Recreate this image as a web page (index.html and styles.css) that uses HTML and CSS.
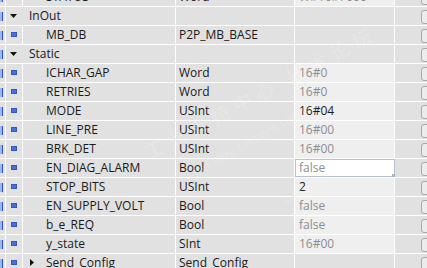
FILE: index.html
```html
<!DOCTYPE html>
<html lang="en">
	<head>
		<meta charset="UTF-8" />
		<title>Static interface</title>
		<link rel="stylesheet" href="styles.css">
	</head>
	<body>
		<div class="table">
			<div class="row">
				<div class="c edge"><span class="mark"></span></div>
				<div class="c icon"><span class="leaf"></span></div>
				<div class="c name">STATUS</div>
				<div class="c type">Word</div>
				<div class="c val light dim">W#16#7000</div>
				<div class="c check"><span class="box"></span></div>
			</div>
			<div class="row">
				<div class="c edge"><span class="mark"></span></div>
				<div class="c section"><svg class="tri" width="7" height="4" viewBox="0 0 7 4"><polygon points="0,0 7,0 3.5,4" fill="#111"/></svg>InOut</div>
				<div class="c type"></div>
				<div class="c val"></div>
				<div class="c check"><span class="box"></span></div>
			</div>
			<div class="row">
				<div class="c edge"><span class="mark"></span></div>
				<div class="c icon"><span class="leaf"></span></div>
				<div class="c name">MB_DB</div>
				<div class="c type">P2P_MB_BASE</div>
				<div class="c val"></div>
				<div class="c check"><span class="box"></span></div>
			</div>
			<div class="row">
				<div class="c edge"><span class="mark"></span></div>
				<div class="c section"><svg class="tri" width="7" height="4" viewBox="0 0 7 4"><polygon points="0,0 7,0 3.5,4" fill="#111"/></svg>Static</div>
				<div class="c type"></div>
				<div class="c val"></div>
				<div class="c check"><span class="box"></span></div>
			</div>
			<div class="row">
				<div class="c edge"><span class="mark"></span></div>
				<div class="c icon"><span class="leaf"></span></div>
				<div class="c name">ICHAR_GAP</div>
				<div class="c type">Word</div>
				<div class="c val light dim">16#0</div>
				<div class="c check"><span class="box"></span></div>
			</div>
			<div class="row">
				<div class="c edge"><span class="mark"></span></div>
				<div class="c icon"><span class="leaf"></span></div>
				<div class="c name">RETRIES</div>
				<div class="c type">Word</div>
				<div class="c val light dim">16#0</div>
				<div class="c check"><span class="box"></span></div>
			</div>
			<div class="row">
				<div class="c edge"><span class="mark"></span></div>
				<div class="c icon"><span class="leaf"></span></div>
				<div class="c name">MODE</div>
				<div class="c type">USInt</div>
				<div class="c val light">16#04</div>
				<div class="c check"><span class="box"></span></div>
			</div>
			<div class="row">
				<div class="c edge"><span class="mark"></span></div>
				<div class="c icon"><span class="leaf"></span></div>
				<div class="c name">LINE_PRE</div>
				<div class="c type">USInt</div>
				<div class="c val light dim">16#00</div>
				<div class="c check"><span class="box"></span></div>
			</div>
			<div class="row">
				<div class="c edge"><span class="mark"></span></div>
				<div class="c icon"><span class="leaf"></span></div>
				<div class="c name">BRK_DET</div>
				<div class="c type">USInt</div>
				<div class="c val light dim">16#00</div>
				<div class="c check"><span class="box"></span></div>
			</div>
			<div class="row">
				<div class="c edge"><span class="mark"></span></div>
				<div class="c icon"><span class="leaf"></span></div>
				<div class="c name">EN_DIAG_ALARM</div>
				<div class="c type">Bool</div>
				<div class="c val edit dim">false<span class="grip"></span></div>
				<div class="c check"><span class="box"></span></div>
			</div>
			<div class="row">
				<div class="c edge"><span class="mark"></span></div>
				<div class="c icon"><span class="leaf"></span></div>
				<div class="c name">STOP_BITS</div>
				<div class="c type">USInt</div>
				<div class="c val light">2</div>
				<div class="c check"><span class="box"></span></div>
			</div>
			<div class="row">
				<div class="c edge"><span class="mark"></span></div>
				<div class="c icon"><span class="leaf"></span></div>
				<div class="c name">EN_SUPPLY_VOLT</div>
				<div class="c type">Bool</div>
				<div class="c val light dim">false</div>
				<div class="c check"><span class="box"></span></div>
			</div>
			<div class="row">
				<div class="c edge"><span class="mark"></span></div>
				<div class="c icon"><span class="leaf"></span></div>
				<div class="c name">b_e_REQ</div>
				<div class="c type">Bool</div>
				<div class="c val light dim">false</div>
				<div class="c check"><span class="box"></span></div>
			</div>
			<div class="row">
				<div class="c edge"><span class="mark"></span></div>
				<div class="c icon"><span class="leaf"></span></div>
				<div class="c name">y_state</div>
				<div class="c type">SInt</div>
				<div class="c val light dim">16#00</div>
				<div class="c check"><span class="box"></span></div>
			</div>
			<div class="row">
				<div class="c edge"><span class="mark"></span></div>
				<div class="c icon"><span class="leaf"></span></div>
				<div class="c name sub"><svg class="tri" width="4" height="7" viewBox="0 0 4 7"><polygon points="0,0 4,3.5 0,7" fill="#111"/></svg>Send_Config</div>
				<div class="c type">Send_Config</div>
				<div class="c val"></div>
				<div class="c check"><span class="box"></span></div>
			</div>
		</div>
		<div class="watermark">
			<span class="wm-cn">工业支持中心 技术论坛</span>
			<span class="wm-en">industry.siemens.com/cs</span>
			<span class="wm-sp">support</span>
		</div>
	</body>
</html>
```
FILE: styles.css
```css
/* base */
body {
	margin: 0;
	background: #ffffff;
	font-family: 'Open Sans', 'Noto Sans', sans-serif;
	font-size: 12px;
	color: #1a1a1a;
	overflow: hidden;
	width: 427px;
	height: 268px;
	position: relative;
}

.table {
	display: flex;
	flex-direction: column;
	gap: 1px;
	margin-top: -12px;
	background: #ffffff;
}

.row {
	display: grid;
	grid-template-columns: 5px 16px 152px 118px 99px 40px;
	grid-auto-rows: 18px;
	gap: 1px;
}

.c {
	background: #e1e1e1;
	display: flex;
	align-items: center;
	line-height: 18px;
	white-space: nowrap;
	overflow: hidden;
	position: relative;
}

.light {
	background: #efefef;
}

.dim {
	color: #8e8e8e;
}

.edge .mark {
	width: 2px;
	height: 9px;
	background: #9db6ee;
	border-right: 1px solid #2c55c4;
}

.icon {
	justify-content: center;
}

.leaf {
	width: 6px;
	height: 5px;
	margin-left: -1px;
	margin-top: -1px;
	background: #4a6fd6;
	box-shadow: inset 0 0 0 1px #3256c2;
}

.name {
	padding-left: 23px;
}

.name.sub {
	padding-left: 7px;
}

.section {
	grid-column: span 2;
	padding-left: 4px;
}

.tri {
	flex: none;
	margin-right: 12px;
	margin-top: -1px;
}

.type {
	padding-left: 3px;
}

.val {
	padding-left: 4px;
}

.edit {
	background: #ffffff;
	box-shadow: inset 0 0 0 1px #b9c1cf;
	margin-right: -1px;
	z-index: 1;
}

.grip {
	position: absolute;
	right: 0;
	bottom: 0;
	width: 3px;
	height: 3px;
	background: #a9b6ca;
}

.check {
	justify-content: flex-start;
}

.box {
	margin-left: 26px;
	width: 14px;
	height: 12px;
	border: 1px solid #a8a8a8;
	border-radius: 3px;
	background: #ececec;
	margin-top: 1px;
}

.watermark {
	position: absolute;
	left: 0;
	top: 0;
	width: 427px;
	height: 268px;
	pointer-events: none;
	color: rgba(255, 255, 255, 0.22);
}

.wm-cn {
	position: absolute;
	left: 130px;
	top: 78px;
	font-size: 19px;
	font-family: 'Noto Sans CJK SC', sans-serif;
	transform: rotate(-28deg);
	letter-spacing: 6px;
}

.wm-en {
	position: absolute;
	left: 185px;
	top: 130px;
	font-size: 12px;
	transform: rotate(-30deg);
}

.wm-sp {
	position: absolute;
	left: 280px;
	top: 180px;
	font-size: 13px;
	transform: rotate(-30deg);
}
```
